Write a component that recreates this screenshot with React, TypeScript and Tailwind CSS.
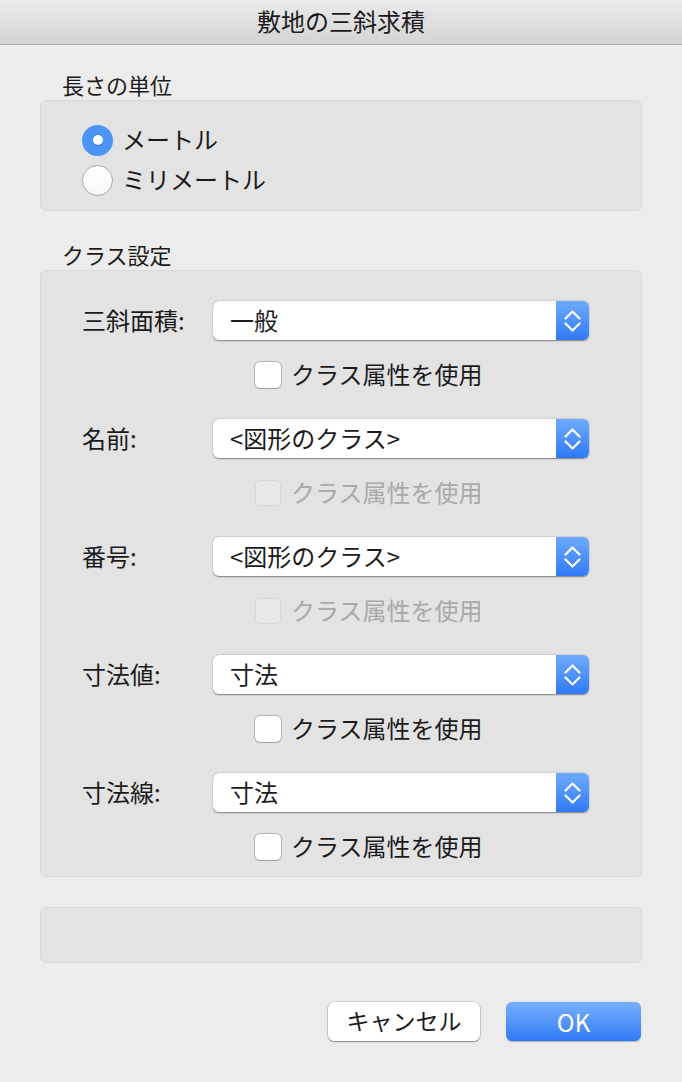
import React from 'react';

const font = { fontFamily: '"Noto Sans CJK JP", "Noto Sans", sans-serif' };

function Chevrons() {
    return (
        <svg width="17" height="24" viewBox="0 0 17 24" fill="none" stroke="white" strokeWidth="2.2" strokeLinecap="round" strokeLinejoin="round">
            <path d="M1.5 9.5 L8.5 2.5 L15.5 9.5" />
            <path d="M1.5 14.5 L8.5 21.5 L15.5 14.5" />
        </svg>
    );
}

function Select({ value }: { value: string }) {
    return (
        <div className="flex h-[39px] w-[376px] overflow-hidden rounded-[6px] bg-white shadow-[0_0.5px_1.5px_rgba(0,0,0,0.45)]">
            <div className="flex flex-1 items-center pb-[2px] pl-[17px] text-[24px] text-[#1b1b1b]">{value}</div>
            <div className="flex w-[33px] items-center justify-center bg-gradient-to-b from-[#6eaafc] to-[#2f79f6]">
                <Chevrons />
            </div>
        </div>
    );
}

function Checkbox({ disabled }: { disabled?: boolean }) {
    return (
        <div className="flex h-[28px] items-center gap-[10px] pl-[42px]">
            <div
                className={
                    disabled
                        ? 'h-[26px] w-[26px] shrink-0 rounded-[5px] border border-[#d6d6d6] bg-[#e8e8e8]'
                        : 'h-[26px] w-[26px] shrink-0 rounded-[5px] bg-white shadow-[0_0_0_1px_rgba(0,0,0,0.2),0_1px_1px_rgba(0,0,0,0.1)]'
                }
            />
            <span className={disabled ? 'pb-[3px] text-[24px] text-[#a9a9a9]' : 'pb-[3px] text-[24px] text-[#1b1b1b]'}>
                クラス属性を使用
            </span>
        </div>
    );
}

interface Row {
    label: string;
    value: string;
    disabled?: boolean;
}

const rows: Row[] = [
    { label: '三斜面積:', value: '一般' },
    { label: '名前:', value: '<図形のクラス>', disabled: true },
    { label: '番号:', value: '<図形のクラス>', disabled: true },
    { label: '寸法値:', value: '寸法' },
    { label: '寸法線:', value: '寸法' },
];

export default function App() {
    return (
        <div className="flex h-[1082px] w-[682px] flex-col bg-[#ececec] text-[#1b1b1b]" style={font}>
            {/* title bar */}
            <div className="flex h-[45px] shrink-0 items-center justify-center border-b border-[#b3b3b3] bg-gradient-to-b from-[#ebebeb] to-[#d4d4d4] pb-[2px] text-[24px]">
                敷地の三斜求積
            </div>

            <div className="flex flex-col px-[40px]">
                <div className="mt-[26px] h-[28px] pl-[22px] text-[22px] leading-[26px]">長さの単位</div>
                <div className="mt-[1px] flex h-[111px] flex-col rounded-[6px] border border-[#d9d9d9] bg-[#e3e3e3] pl-[41px] pt-[19px]">
                    <div className="flex h-[40px] items-center gap-[9px]">
                        <div className="flex h-[31px] w-[31px] items-center justify-center rounded-full bg-[#4c95f7]">
                            <div className="h-[10px] w-[10px] rounded-full bg-white shadow-[0_1px_1px_rgba(0,0,0,0.25)]" />
                        </div>
                        <span className="pb-[3px] text-[24px]">メートル</span>
                    </div>
                    <div className="flex h-[40px] items-center gap-[9px]">
                        <div className="h-[31px] w-[31px] rounded-full border border-[#a9a9a9] bg-gradient-to-b from-white to-[#f7f7f7]" />
                        <span className="pb-[3px] text-[24px]">ミリメートル</span>
                    </div>
                </div>

                <div className="mt-[30px] h-[28px] pl-[22px] text-[22px] leading-[26px]">クラス設定</div>
                <div className="mt-[1px] flex h-[607px] flex-col gap-[30px] rounded-[6px] border border-[#d9d9d9] bg-[#e3e3e3] pl-[41px] pt-[30px]">
                    {rows.map((r) => (
                        <div key={r.label} className="flex flex-col">
                            <div className="flex items-center">
                                <div className="w-[131px] pb-[2px] text-[24px]">{r.label}</div>
                                <Select value={r.value} />
                            </div>
                            <div className="mt-[21px] pl-[131px]">
                                <Checkbox disabled={r.disabled} />
                            </div>
                        </div>
                    ))}
                </div>

                <div className="mt-[30px] h-[56px] rounded-[6px] border border-[#d9d9d9] bg-[#e3e3e3]" />

                <div className="mt-[39px] flex justify-end gap-[26px] pr-[1px]">
                    <button className="flex h-[39px] w-[152px] items-center justify-center rounded-[6px] bg-white pb-[2px] text-[23px] text-[#1b1b1b] shadow-[0_0_0_0.5px_rgba(0,0,0,0.2),0_1px_1.5px_rgba(0,0,0,0.35)]">
                        キャンセル
                    </button>
                    <button className="flex h-[39px] w-[135px] items-center justify-center rounded-[6px] bg-gradient-to-b from-[#78b0fb] to-[#2f79f6] text-[24px] text-white shadow-[0_0.5px_1px_rgba(0,0,0,0.25)]">
                        OK
                    </button>
                </div>
            </div>
        </div>
    );
}
